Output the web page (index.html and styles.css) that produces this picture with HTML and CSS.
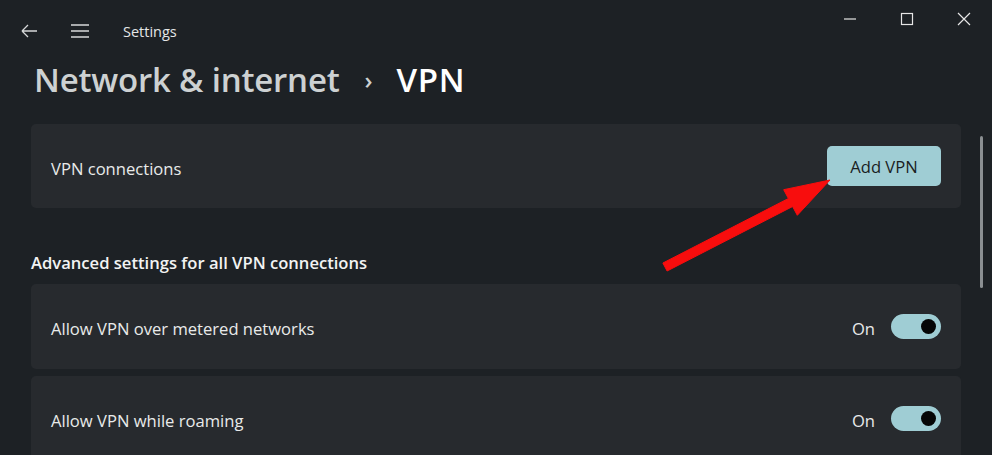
FILE: index.html
```html
<!DOCTYPE html>
<html>
<head>
<meta charset="utf-8">
<link rel="stylesheet" href="styles.css">
</head>
<body>
<div class="window">
  <div class="titlebar">
    <div class="tb-left">
      <span class="tb-icon back">
        <svg width="18" height="14" viewBox="0 0 18 14"><path d="M1 7H16M1 7L7 1M1 7L7 13" fill="none" stroke="#d6d8d9" stroke-width="1.3"/></svg>
      </span>
      <span class="tb-icon menu">
        <svg width="20" height="14" viewBox="0 0 20 14"><path d="M1 1H19M1 7H19M1 13H19" fill="none" stroke="#d6d8d9" stroke-width="1.3"/></svg>
      </span>
      <span class="app-name">Settings</span>
    </div>
    <div class="tb-controls">
      <span class="ctl"><svg width="14" height="14" viewBox="0 0 14 14"><path d="M1 7H13" stroke="#e6e6e6" stroke-width="1.2"/></svg></span>
      <span class="ctl"><svg width="14" height="14" viewBox="0 0 14 14"><rect x="1.5" y="1.5" width="11" height="11" fill="none" stroke="#e6e6e6" stroke-width="1.2"/></svg></span>
      <span class="ctl"><svg width="14" height="14" viewBox="0 0 14 14"><path d="M1 1L13 13M13 1L1 13" stroke="#e6e6e6" stroke-width="1.2"/></svg></span>
    </div>
  </div>
  <div class="body">
    <div class="main">
      <h1 class="crumb"><span class="crumb-parent">Network &amp; internet</span><span class="crumb-sep">›</span><span class="crumb-cur">VPN</span></h1>
      <div class="card card-first">
        <span class="card-label">VPN connections</span>
        <button class="btn-accent">Add VPN</button>
      </div>
      <h2 class="section">Advanced settings for all VPN connections</h2>
      <div class="card">
        <span class="card-label">Allow VPN over metered networks</span>
        <div class="toggle-wrap"><span class="toggle-text">On</span><span class="toggle"><span class="knob"></span></span></div>
      </div>
      <div class="card card-gap">
        <span class="card-label">Allow VPN while roaming</span>
        <div class="toggle-wrap"><span class="toggle-text">On</span><span class="toggle"><span class="knob"></span></span></div>
      </div>
    </div>
    <div class="scroll-track"><div class="scroll-thumb"></div></div>
  </div>
  <svg class="annot" width="992" height="455" viewBox="0 0 992 455">
    <polygon points="662.9,263 788.4,198.5 783.7,189.7 830,180 797.3,215.3 792.6,206.5 667.1,271" fill="#f80d0d" stroke="#f80d0d" stroke-width="1" stroke-linejoin="round"/>
  </svg>
</div>
</body>
</html>
```

FILE: styles.css
```css
html, body {
  margin: 0;
  padding: 0;
  background: #1d2125;
}
body {
  font-family: "Open Sans", "Noto Sans", sans-serif;
  color: #e9eaea;
  width: 992px;
  height: 455px;
  overflow: hidden;
}
.window {
  position: relative;
  width: 992px;
  height: 455px;
}
.titlebar {
  height: 60px;
  display: flex;
  justify-content: space-between;
}
.tb-left {
  display: flex;
  align-items: center;
  padding-left: 21px;
  padding-top: 2px;
}
.tb-icon {
  display: flex;
}
.back { margin-right: 31px; }
.menu { margin-right: 33px; }
.app-name {
  font-size: 14.5px;
  color: #e4e6e7;
}
.tb-controls {
  display: flex;
  align-self: flex-start;
  height: 38px;
  align-items: center;
  padding-right: 21px;
}
.ctl {
  display: flex;
  margin-left: 43px;
}
.body {
  display: flex;
}
.main {
  width: 930px;
  padding-left: 31px;
}
.crumb {
  margin: 0 0 24px 3px;
  height: 40px;
  line-height: 40px;
  font-size: 33px;
  font-weight: 600;
  display: flex;
  align-items: center;
  white-space: nowrap;
}
.crumb-parent { color: #cdd1d2; letter-spacing: -0.2px; }
.crumb-sep {
  color: #cdd1d2;
  font-size: 24px;
  margin: 0 24px 0 25px;
  font-weight: 600;
}
.crumb-cur { color: #ffffff; letter-spacing: 0.6px; }
.card {
  background: #272a2e;
  border-radius: 5px;
  height: 85px;
  display: flex;
  align-items: center;
  justify-content: space-between;
  padding: 0 20px;
  box-sizing: border-box;
}
.card-first { height: 84px; }
.card-gap { margin-top: 7px; }
.card-label {
  font-size: 16.6px;
  color: #e9eaea;
  padding-top: 4px;
}
.btn-accent {
  width: 114px;
  height: 40px;
  border: none;
  border-radius: 5px;
  background: #9fcdd4;
  color: #1a1d1f;
  font-family: inherit;
  font-size: 16.6px;
  padding: 1px 0 0 0;
}
.section {
  margin: 44px 0 10px 0;
  height: 22px;
  line-height: 22px;
  font-size: 16.6px;
  font-weight: 600;
  color: #f2f3f3;
}
.toggle-wrap {
  display: flex;
  align-items: center;
}
.toggle-text {
  font-size: 16.6px;
  margin-right: 16px;
  padding-top: 3px;
}
.toggle {
  width: 50px;
  height: 25px;
  border-radius: 13px;
  background: #9fcdd4;
  display: flex;
  align-items: center;
  justify-content: flex-end;
  box-sizing: border-box;
  padding-right: 5px;
}
.knob {
  width: 15px;
  height: 15px;
  border-radius: 50%;
  background: #050606;
}
.scroll-track {
  width: 31px;
  display: flex;
  justify-content: center;
  padding-left: 10px;
  box-sizing: border-box;
}
.scroll-thumb {
  width: 3px;
  height: 152px;
  margin-top: 76px;
  background: #8b8f92;
  border-radius: 2px;
}
.annot {
  position: absolute;
  left: 0;
  top: 0;
  pointer-events: none;
}
```
